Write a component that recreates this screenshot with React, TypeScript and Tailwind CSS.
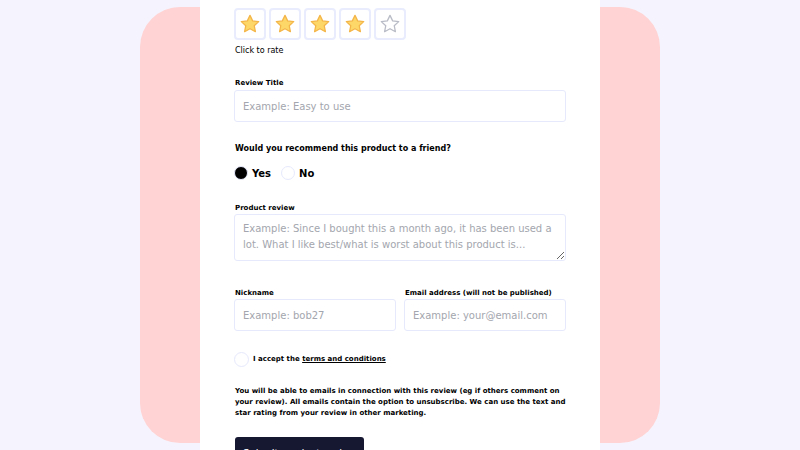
import { useState } from 'react'

const font = { fontFamily: '"DejaVu Sans", sans-serif' }

function Star({ filled }: { filled: boolean }) {
  return (
    <svg width="22" height="22" viewBox="0 0 24 24">
      <path
        d="M12 2.6l2.9 6 6.6.8-4.9 4.5 1.3 6.5L12 17.2l-5.9 3.2 1.3-6.5-4.9-4.5 6.6-.8z"
        fill={filled ? '#fdd768' : 'none'}
        stroke={filled ? '#f4b548' : '#b9bcc6'}
        strokeWidth="1.4"
        strokeLinejoin="round"
      />
    </svg>
  )
}

function Dot({ on, size }: { on: boolean; size: string }) {
  return (
    <span
      className={
        size +
        (on
          ? ' shrink-0 rounded-full border border-[#e6e9fc] bg-black'
          : ' shrink-0 rounded-full border border-[#e6e9fc] bg-white')
      }
    />
  )
}

export default function App() {
  const [rating, setRating] = useState(4)
  const [recommend, setRecommend] = useState(true)
  const [accepted, setAccepted] = useState(false)

  return (
    <div
      className="h-[450px] overflow-hidden bg-[#f5f4fe] px-[140px] py-[7px] text-black"
      style={font}
    >
      <div className="flex h-full justify-center rounded-[40px] bg-[#ffd3d3]">
        <div className="-mt-[7px] h-[450px] w-[400px] shrink-0 overflow-hidden bg-white px-[34px] pt-[8px]">
          <div className="flex gap-[3px]">
            {[1, 2, 3, 4, 5].map((n) => (
              <button
                key={n}
                onClick={() => setRating(n)}
                className="grid h-[32px] w-[32px] place-items-center rounded-[4px] border-2 border-[#e8ecfd]"
              >
                <Star filled={n <= rating} />
              </button>
            ))}
          </div>
          <p className="mt-[6px] pl-px text-[8px] leading-[10px]">Click to rate</p>

          <label className="mt-[22px] block pl-px text-[7px] font-bold leading-[11px]">Review Title</label>
          <input
            className="mt-[1px] h-[32px] w-full rounded-[3px] border border-[#e6e9fc] px-[8px] text-[10px] outline-none placeholder:text-[#a3a6ae]"
            placeholder="Example: Easy to use"
          />

          <p className="mt-[22px] pl-px text-[8px] font-bold leading-[10px]">
            Would you recommend this product to a friend?
          </p>
          <div className="mt-[12px] flex h-[14px] items-center text-[10px] font-bold">
            <button onClick={() => setRecommend(true)} className="flex items-center gap-[4px]">
              <Dot on={recommend} size="h-[14px] w-[14px]" />
              Yes
            </button>
            <button onClick={() => setRecommend(false)} className="ml-[10px] flex items-center gap-[4px]">
              <Dot on={!recommend} size="h-[14px] w-[14px]" />
              No
            </button>
          </div>

          <label className="mt-[23px] block pl-px text-[7px] font-bold leading-[11px]">Product review</label>
          <textarea
            className="block h-[47px] w-full rounded-[3px] border border-[#e6e9fc] px-[8px] py-[6px] text-[10px] leading-[16px] outline-none placeholder:text-[#a3a6ae]"
            placeholder="Example: Since I bought this a month ago, it has been used a lot. What I like best/what is worst about this product is..."
          />

          <div className="mt-[27px] grid grid-cols-2 gap-[8px]">
            <div>
              <label className="block pl-px text-[7px] font-bold leading-[11px]">Nickname</label>
              <input
                className="h-[32px] w-full rounded-[3px] border border-[#e6e9fc] px-[8px] text-[10px] outline-none placeholder:text-[#a3a6ae]"
                placeholder="Example: bob27"
              />
            </div>
            <div>
              <label className="block pl-px text-[7px] font-bold leading-[11px]">
                Email address (will not be published)
              </label>
              <input
                className="h-[32px] w-full rounded-[3px] border border-[#e6e9fc] px-[8px] text-[10px] outline-none placeholder:text-[#a3a6ae]"
                placeholder="Example: your@email.com"
              />
            </div>
          </div>

          <button
            onClick={() => setAccepted(!accepted)}
            className="mt-[21px] flex h-[15px] items-center gap-[4px] text-[7px] font-bold"
          >
            <Dot on={accepted} size="h-[15px] w-[15px]" />
            <span>
              I accept the <span className="underline">terms and conditions</span>
            </span>
          </button>

          <p className="mt-[19px] pl-px text-[7px] font-bold leading-[11px]">
            You will be able to emails in connection with this review (eg if others comment on your
            review). All emails contain the option to unsubscribe. We can use the text and star rating
            from your review in other marketing.
          </p>

          <button className="mt-[18px] ml-px h-[32px] rounded-[3px] bg-[#161832] px-[8px] text-[10px] text-white">
            Submit product review
          </button>
        </div>
      </div>
    </div>
  )
}
